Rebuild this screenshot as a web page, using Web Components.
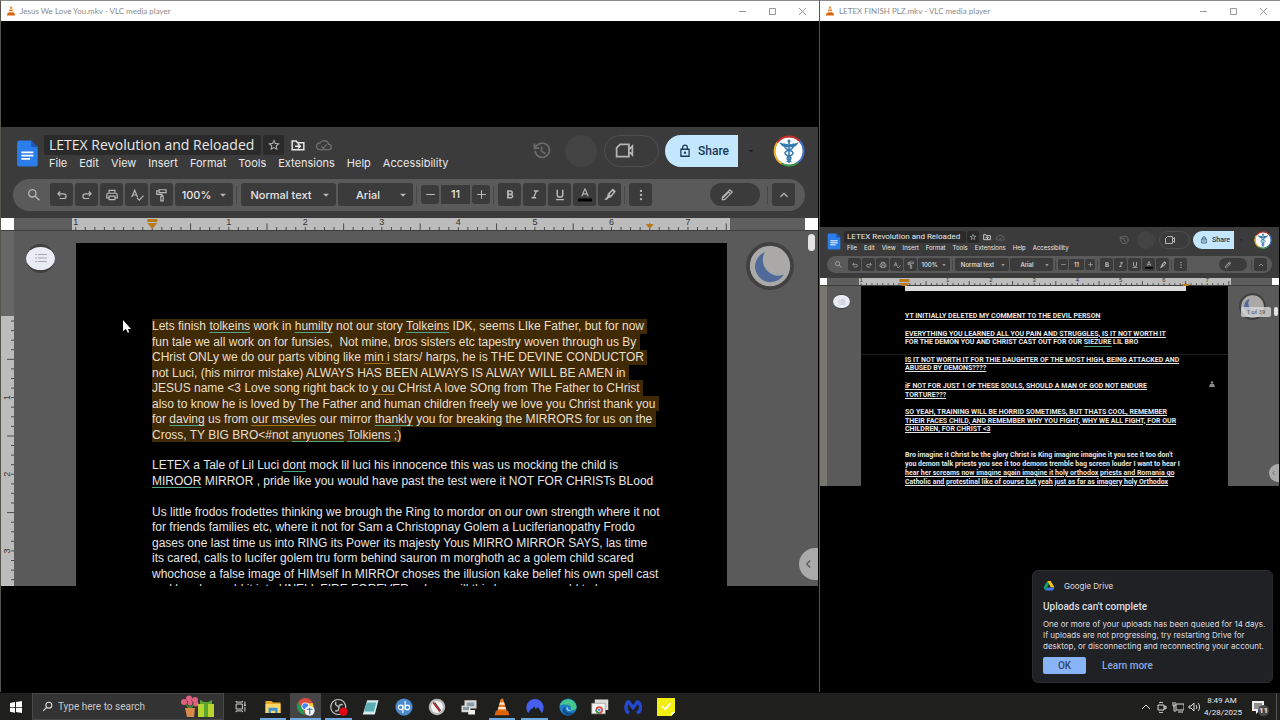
<!DOCTYPE html>
<html lang="en">
<head>
<meta charset="utf-8">
<title>Desktop</title>
<style>
html,body{margin:0;height:100%;background:#000;overflow:hidden}
body{font-family:Roboto,"Liberation Sans",sans-serif}
</style>
</head>
<body>
<desk-top>
  <player-window caption="Jesus We Love You.mkv - VLC media player">
    <docs-app>
      <p class="hl" style="--n:8">
        <span>Lets finish <u>tolkeins</u> work in <u>humilty</u> not our story <u>Tolkeins</u> IDK, seems LIke Father, but for now </span>
        <span>fun tale we all work on for funsies,&nbsp; Not mine, bros sisters etc tapestry woven through us By </span>
        <span>CHrist ONLy we do our parts vibing like <u class="o">min i</u> stars/ harps, he is THE DEVINE CONDUCTOR </span>
        <span>not Luci, (his mirror mistake) ALWAYS HAS BEEN ALWAYS IS ALWAY WILL BE AMEN in </span>
        <span>JESUS name &lt;3 Love song right back to <u class="o">y ou</u> CHrist A love SOng from The Father to CHrist </span>
        <span>also to know he is loved by The Father and human children freely we love you Christ thank you </span>
        <span>for <u>daving</u> us from <u class="o">our msevles</u> our mirror <u>thankly</u> you for breaking the MIRRORS for us on the </span>
        <span>Cross, TY BIG BRO&lt;#not <u>anyuones</u> <u>Tolkiens</u> ;)</span>
      </p>
      <p class="skip" style="--n:2">
        <span>LETEX a Tale of Lil Luci <u>dont</u> mock lil luci his innocence this was us mocking the child is</span>
        <span><u>MIROOR</u> MIRROR , pride like you would have past the test were it NOT FOR CHRISTs BLood</span>
      </p>
      <p class="skip" style="--n:6">
        <span>Us little frodos frodettes thinking we brough the Ring to mordor on our own strength where it not</span>
        <span>for friends families etc, where it not for Sam a Christopnay Golem a Luciferianopathy Frodo</span>
        <span>gases one last time us into RING its Power its majesty Yous MIRRO MIRROR SAYS, las time</span>
        <span>its cared, calls to lucifer golem tru form behind sauron m morghoth ac a golem child scared</span>
        <span>whochose a false image of HIMself In MIRROr choses the illusion kake belief his own spell cast</span>
        <span>and breaks world it into HNELL FIRE FOREVER, where will this become a world to love</span>
      </p>
    </docs-app>
  </player-window>
  <player-window caption="LETEX FINISH PLZ.mkv - VLC media player">
    <docs-app compact>
      <p class="b" style="--n:1"><span>YT INITIALLY DELETED MY COMMENT TO THE DEVIL PERSON</span></p>
      <p class="b skip" style="--n:2"><span>EVERYTHING YOU LEARNED ALL YOU PAIN AND STRUGGLES, IS IT NOT WORTH IT</span>
        <span class="n">FOR THE DEMON YOU AND CHRIST CAST OUT FOR OUR <u>SIEZURE</u> LIL BRO</span></p>
      <p class="b skip" style="--n:2"><span>IS IT NOT WORTH IT FOR THIE DAUGHTER OF THE MOST HIGH, BEING ATTACKED AND</span>
        <span>ABUSED BY DEMONS????</span></p>
      <p class="b skip" style="--n:2"><span>iF NOT FOR JUST 1 OF THESE SOULS, SHOULD A MAN OF GOD NOT ENDURE</span>
        <span>TORTURE???</span></p>
      <p class="b skip" style="--n:3"><span>SO YEAH, TRAINING WILL BE HORRID SOMETIMES, BUT THATS COOL, REMEMBER</span>
        <span>THEIR FACES CHILD, AND REMEMBER WHY YOU FIGHT, WHY WE ALL FIGHT, FOR OUR</span>
        <span>CHILDREN, FOR CHRIST &lt;3</span></p>
      <p class="b skip2" style="--n:4"><span class="n">Bro imagine it Christ be the glory Christ is King imagine imagine it you see it too don't</span>
        <span class="n">you demon talk priests you see it too demons tremble bag screen louder I want to hear I</span>
        <span>hear her screams now imagine again imagine it holy orthodox priests and Romania go</span>
        <span>Catholic and protestinal like of course but yeah just as far as imagery holy Orthodox</span></p>
    </docs-app>
  </player-window>
  <drive-toast slot="toast"></drive-toast>
  <task-bar slot="bar"></task-bar>
</desk-top>
<script>
const stroke = (body, w = 2) => `<g fill="none" stroke="currentColor" stroke-width="${w}">${body}</g>`;
const ICON = {
  search: stroke('<circle cx="9.500" cy="9.500" r="5.500"/><path d="M13.500 13.500 20 20"/>'),
  undo: stroke('<path d="M9 6 5 10l4 4M5 10h10a4 4 0 0 1 0 8H8"/>'),
  redo: stroke('<path d="m15 6 4 4-4 4M19 10H9a4 4 0 0 0 0 8h7"/>'),
  print: stroke('<path d="M7 9V4h10v5M7 17H3v-5a3 3 0 0 1 3-3h12a3 3 0 0 1 3 3v5h-4M7 14h10v6H7z"/>'),
  spell: stroke('<path d="m3 16 5-12 5 12M5 12h6M12 17l4 4 7-8"/>'),
  paint: stroke('<path d="M7 3h12v5H7zM7 5H3v6h9v3M10 14h4v8h-4z"/>'),
  caret: '<path fill="currentColor" d="M5 9h14l-7 7z"/>',
  minus: stroke('<path d="M4 12h16"/>'),
  plus: stroke('<path d="M4 12h16M12 4v16"/>'),
  bold: '<path fill="currentColor" d="M15.600 10.800c1-.7 1.600-1.800 1.600-2.800 0-2.300-1.700-4-4-4H7v14h7c2.100 0 3.700-1.700 3.700-3.800 0-1.500-.8-2.800-2.100-3.400zM10 6.500h3a1.500 1.500 0 0 1 0 3h-3zm3.500 9H10v-3h3.500a1.500 1.500 0 0 1 0 3z"/>',
  italic: '<path fill="currentColor" d="M10 4v2.500h2.700l-3.800 9H6V18h8v-2.500h-2.700l3.800-9H18V4z"/>',
  under: '<path fill="currentColor" d="M12 17a6 6 0 0 0 6-6V3h-2.500v8a3.500 3.500 0 0 1-7 0V3H6v8a6 6 0 0 0 6 6zm-7 2v2h14v-2z"/>',
  color: '<path fill="currentColor" d="M11 1 5.500 14h2.300l1.100-3h6.200l1.100 3h2.300L13 1zm-1.400 8L12 3.500 14.400 9z"/><path d="M-2 18h28v5H-2z" fill="#000"/>',
  marker: '<path fill="currentColor" d="m17 1 5 5-8 10-4 1-3 3H2l5-5 1-5zM16 5l-5 6 2 2 5-6z" fill-rule="evenodd"/>',
  more: '<g fill="currentColor"><circle cx="12" cy="5" r="2"/><circle cx="12" cy="12" r="2"/><circle cx="12" cy="19" r="2"/></g>',
  pencil: stroke('<path d="M4 20v-4L17 3l4 4L8 20zM14 6l4 4M5 17 16 6"/>'),
  up: stroke('<path d="m6 15 6-6 6 6"/>'),
  left: stroke('<path d="m14 6-6 6 6 6"/>'),
  star: '<path fill="currentColor" d="m22 9.240-7.190-.62L12 2 9.190 8.630 2 9.240l5.460 4.730L5.820 21 12 17.270 18.180 21l-1.630-7.030zM12 15.400l-3.760 2.270 1-4.280-3.320-2.880 4.380-.38L12 6.100l1.710 4.040 4.380.38-3.320 2.880 1 4.280z"/>',
  folder: stroke('<path d="M2 5h7l2 3h11v12H2zM7 14h8M12 10l4 4-4 4"/>', 2.5),
  cloud: stroke('<path d="M6 19a5 5 0 0 1 0-10 7 7 0 0 1 13 2 4 4 0 0 1 0 8zM8 14l3 3 5-6"/>', 2),
  history: stroke('<path d="M4 12a9 9 0 1 0 3-7L3 8M3 3v6h6M12 7v6l5 3"/>', 2.2),
  cam: stroke('<path d="M7 5h10v14H3V9zM17 11l4-4v10l-4-4"/>', 2),
  lock: stroke('<path d="M5 9h14v12H5zM8 9V6a4 4 0 0 1 8 0v3"/>', 2.2) + '<circle cx="12" cy="15" r="2" fill="currentColor"/>',
  list: stroke('<path d="M7 6h15M7 12h15M7 18h15M2 6h3M2 12h3M2 18h3"/>', 2),
  docs: '<path fill="#2b7de9" d="M3 0h11l6 6v16a2 2 0 0 1-2 2H3a2 2 0 0 1-2-2V2a2 2 0 0 1 2-2z"/><path fill="#1b56b8" d="M14 0l6 6h-6z"/><path stroke="#fff" stroke-width="1.500" d="M5 11h11M5 14h11M5 17h8"/>',
  cone: '<path fill="#e8781a" d="M10.500 1h3l5 17h-13z"/><path fill="#f6e8da" d="m9.200 6-.9 3h7.400l-.9-3zm-1.800 6-.8 3h10.800l-.8-3z"/><path fill="#d9640c" d="M4 17h16l2 6H2z"/>',
  moon: '<circle cx="12" cy="12" r="12" fill="#414142"/><circle cx="12" cy="12" r="10.100" fill="#aaa9a7"/><path fill="#4f6a99" d="M9.500 5a7.800 7.800 0 1 0 9.500 11.300A7.800 7.800 0 0 1 9.500 5z"/>',
  avatar: '<circle cx="12" cy="12" r="10.400" fill="#fff"/><g fill="none" stroke-width="1.400"><path stroke="#c5312a" d="M3.300 5.500a11 11 0 0 1 16.500-1.200"/><path stroke="#3f6fd0" d="M19.800 4.300a11 11 0 0 1-1 16.400"/><path stroke="#3b9a4a" d="M18.800 20.700a11 11 0 0 1-12.500.7"/><path stroke="#e6b52c" d="M6.300 21.400A11 11 0 0 1 3.300 5.500"/></g><g fill="none" stroke="#3578ad"><path stroke-width="1.200" d="M12 4v17"/><path stroke-width="1.100" d="M9 9c0 2.500 6 2 6 4.500s-4.500 2-4.500 4 3 1.500 3 3M15 9c0 2.500-6 2-6 4.500s4.500 2 4.500 4-3 1.500-3 3"/></g><path fill="#3578ad" d="M12 7.500C10 6 7.500 7 5 5.300c.7 3 3.500 4.500 7 3.800 3.500.7 6.300-.8 7-3.800-2.500 1.700-5 .7-7 2.200z"/><circle cx="12" cy="4.500" r="1.200" fill="#3578ad"/>',
};
const icon = (n, c = '') => `<svg class="i ${c}" viewBox="0 0 24 24" aria-hidden="true">${ICON[n]}</svg>`;

const define = (name, html) => customElements.define(name, class extends HTMLElement {
  connectedCallback() {
    if (this.shadowRoot) return;
    this.attachShadow({ mode: 'open' }).innerHTML = typeof html === 'function' ? html(this) : html;
  }
});

define('desk-top', `<style>
:host{display:flex;flex-direction:column;height:100vh;position:relative;background:#000}
main{flex:1;display:grid;grid-template-columns:819fr 461fr;min-height:0}
::slotted(drive-toast){position:absolute;right:7px;bottom:37px}
</style><main><slot></slot></main><slot name="toast"></slot><slot name="bar"></slot>`);

define('player-window', el => `<style>
:host{display:flex;flex-direction:column;min-width:0;border-left:1px solid #55554c;border-top:1px solid #8a8a8a;background:#000;box-sizing:border-box}
header{display:flex;align-items:center;height:20px;background:#fff;color:#8a8a8a;padding:0 6px 0 5px}
.i{width:10px;height:10px;margin-right:4px}
h2{margin:0;flex:1;font:400 8px/12px Lato,"Open Sans",sans-serif;white-space:nowrap}
nav{display:flex;gap:20px;padding-right:6px}
button{all:unset;width:10px;height:10px;display:block}
button svg{display:block;width:10px;height:10px;fill:none;stroke:#999}
section{flex:1;display:flex;align-items:center;min-height:0;padding-right:1px}
::slotted(*){flex:1;min-width:0}
</style><header>${icon('cone')}<h2>${el.getAttribute('caption')}</h2><nav>
<button aria-label="Minimize"><svg viewBox="0 0 10 10"><path d="M2 5.500h7"/></svg></button>
<button aria-label="Maximize"><svg viewBox="0 0 10 10"><path d="M2.500 2.500h6v6h-6z"/></svg></button>
<button aria-label="Close"><svg viewBox="0 0 10 10"><path d="m2 2 7 7M9 2 2 9"/></svg></button>
</nav></header><section><slot></slot></section>`);

define('docs-app', el => `<style>
:host{display:flex;flex-direction:column;aspect-ratio:16/9;background:#3b3b3b;overflow:hidden;
 --corner:13px;--rulerh:12px;--rl:58px;--rr:75px;--rfont:9px;--gl:62px;--gr:91px;--top:12px;--pt:76px;--pl:76px;
 --rows:18;--bodyh:278px;--text:400 12px/1 "Liberation Sans",Arial,sans-serif}
:host([compact]){--corner:7px;--rulerh:7px;--rl:32px;--rr:41px;--rfont:6px;--gl:34px;--gr:51px;--top:0px;--pt:21px;--pl:44px;
 --rows:20;--bodyh:174px;--text:700 7px/1 Roboto,"Liberation Sans",sans-serif}
.body{flex:1;display:flex;min-height:0;background:#5a5a5a;position:relative}
.gl{width:var(--gl);flex:none}
.page{flex:1;min-width:0;margin-top:var(--top);background:#000;overflow:hidden}
.strip{display:none}
article{display:grid;grid-template-rows:repeat(var(--rows),1fr);height:var(--bodyh);padding:var(--pt) 0 0 var(--pl);
 font:var(--text);color:#e6e6e6}
.gr{width:var(--gr);flex:none;position:relative}
.outline{all:unset;box-sizing:border-box;width:29px;height:29px;margin:13px 0 0 12px;border-radius:15px;background:#e9ecf5;border:solid #414142;border-width:3px 0;display:flex;align-items:center;justify-content:center;color:#a3a6b4}
.outline .i{width:14px;height:14px}
.moon{position:absolute;left:19px;top:11px;width:48px;height:48px}
.thumb{position:absolute;right:3px;top:3px;width:7px;height:17px;border-radius:4px;background:#e4e4e4}
.side{all:unset;position:absolute;right:0;bottom:6px;width:19px;height:32px;border-radius:16px 0 0 16px;background:#aaa;color:#555;display:flex;align-items:center;justify-content:center}
.side .i{width:14px;height:14px}
.cursor{position:absolute;left:121px;top:88px;width:9px;height:15px}
.tip,.note,.rule{display:none}
:host([compact]) .strip{display:block;height:5px;margin:0 42px 0 44px;background:#dcdcdc}
:host([compact]) .outline{width:17px;height:15px;border-width:1px 0;margin:8px 0 0 6px}
:host([compact]) .outline .i{width:8px;height:8px}
:host([compact]) .moon{left:11px;top:7px;width:27px;height:27px}
:host([compact]) .thumb{right:1px;top:21px;width:4px;height:9px}
:host([compact]) .side{width:10px;height:18px;bottom:4px}
:host([compact]) .side .i{width:8px;height:8px}
:host([compact]) .cursor{display:none}
:host([compact]) .tip{display:block;position:absolute;right:8px;top:21px;width:30px;border-radius:2px;background:#d8d8d8;color:#444;opacity:.8;font:6px/10px Roboto,sans-serif;text-align:center}
:host([compact]) .note{display:block;position:absolute;left:389px;top:95px;width:6px;height:6px;fill:#8a8a8a}
:host([compact]) .rule{display:block;position:absolute;left:41px;right:51px;top:68px;height:1px;background:#1c1c1c}
</style>
<docs-header ${el.hasAttribute('compact') ? 'compact' : ''}></docs-header>
<docs-toolbar ${el.hasAttribute('compact') ? 'compact' : ''}></docs-toolbar>
<docs-ruler></docs-ruler>
<div class="body"><side-ruler ${el.hasAttribute('compact') ? 'compact' : ''}></side-ruler>
<div class="gl"><button class="outline" aria-label="Outline">${icon('list')}</button></div>
<div class="page"><div class="strip"></div><article><doc-text></doc-text></article></div>
<div class="gr">${icon('moon', 'moon')}<div class="tip">1 of 39</div><div class="thumb"></div><button class="side" aria-label="Show side panel">${icon('left')}</button></div>
<div class="rule"></div><svg class="note" viewBox="0 0 6 6"><circle cx="3" cy="1.500" r="1.300"/><path d="M1 3h4l1 3H0z"/></svg>
<svg class="cursor" viewBox="0 0 9 15"><path fill="#fff" d="M1 1v11l3-2 2 4 1-1-1-3h3z"/></svg></div>`);

// Typed lines: each line of a paragraph sits in one row of the page's line grid.
customElements.define('doc-text', class extends HTMLElement {
  connectedCallback() {
    if (this.shadowRoot) return;
    const host = this.getRootNode().host;
    this.attachShadow({ mode: 'open' }).innerHTML = `<style>
:host{display:grid;grid-row:1/-1;grid-template-rows:subgrid}
p{margin:0;display:grid;grid-template-rows:subgrid;grid-row-end:span var(--n);justify-items:start}
.gap{grid-row-end:span 1}.gap2{grid-row-end:span 2}
span{display:flex;align-items:center;white-space:pre}
.hl span{background:#402a06;color:#e8dfcd}
u{text-decoration:underline 1px #4fa585;text-underline-offset:2px}
u.o{text-decoration-color:#a0701c}
.b span{text-decoration:underline;text-decoration-thickness:1px}
.b .n{text-decoration:none}
</style>`;
    for (const p of host.querySelectorAll(':scope > p')) {
      if (p.classList.contains('skip') || p.classList.contains('skip2')) {
        const g = document.createElement('div');
        g.className = p.classList.contains('skip2') ? 'gap2' : 'gap';
        this.shadowRoot.append(g);
      }
      const q = p.cloneNode(false);
      for (const s of p.querySelectorAll(':scope > span')) {
        const row = document.createElement('span'), text = document.createElement('div');
        row.className = s.className;
        text.append(...[...s.childNodes].map(n => n.cloneNode(true)));
        row.append(text);
        q.append(row);
      }
      this.shadowRoot.append(q);
    }
  }
});

define('docs-header', `<style>
:host{display:flex;box-sizing:border-box;height:52px;padding:8px 13px 0 15px;color:#e8e8e8}
.i{width:14px;height:14px;flex:none}
.docs{width:26px;height:29px;margin:4px 0 0 0}
.names{margin-left:2px}
.row{display:flex;align-items:center;gap:2px}
h1{margin:0;font:400 14px/20px "Open Sans",Roboto,sans-serif;background:#2a2a2a;padding:0 7px 0 5px;border-radius:2px;white-space:nowrap}
.star{all:unset;width:21px;height:20px;background:#2a2a2a;display:grid;place-items:center;border-radius:2px;color:#bbb}
.fold,.cl{all:unset;display:grid;place-items:center;width:24px;height:20px}
.cl{color:#707070}
.cl .i{width:16px;height:16px}
menu{display:flex;gap:12px;margin:1px 0 0;padding:0 5px;font:11px/15px Inter,Roboto,sans-serif;list-style:none}
menu button{all:unset;white-space:nowrap}
.right{margin-left:auto;display:flex;align-items:center;height:32px}
.hist{color:#6c6c6c;width:19px;height:19px}
.dot{width:32px;height:32px;border-radius:50%;background:#434343;margin:0 7px 0 14px}
.meet{all:unset;box-sizing:border-box;width:55px;height:32px;border:1px solid #4e4e4e;border-radius:16px;display:flex;align-items:center;padding-left:9px;color:#b5b5b5}
.meet .i{width:21px;height:21px}
.share{all:unset;box-sizing:border-box;margin-left:6px;width:73px;height:32px;border-radius:16px 0 0 16px;background:#c2e7ff;color:#1c3a52;display:flex;align-items:center;padding-left:13px;gap:6px;font:500 12px/16px Roboto,sans-serif}
.c{color:#1a1a1a;width:8px;height:8px;margin:0 18px 0 9px}
.av{width:32px;height:32px}
:host([compact]){height:29px;padding:4px 7px 0 7px}
:host([compact]) .i{width:8px;height:8px}
:host([compact]) .docs{width:16px;height:17px;margin-top:2px}
:host([compact]) .names{margin-left:1px}
:host([compact]) h1{font:400 8px/12px Roboto,sans-serif;padding:0 6px 0 3px}
:host([compact]) .row{gap:1px}
:host([compact]) .star{width:12px;height:12px}
:host([compact]) .fold,:host([compact]) .cl{width:13px;height:12px}
:host([compact]) .cl .i{width:9px;height:9px}
:host([compact]) menu{font-size:6px;line-height:8px;gap:7px;padding:0 3px}
:host([compact]) .right{height:18px}
:host([compact]) .hist{width:10px;height:10px}
:host([compact]) .dot{width:18px;height:18px;margin:0 4px 0 8px}
:host([compact]) .meet{width:31px;height:18px;padding-left:4px}
:host([compact]) .meet .i{width:12px;height:12px}
:host([compact]) .share{width:41px;height:18px;padding-left:7px;gap:4px;margin-left:3px;font-size:7px;line-height:10px}
:host([compact]) .c{width:4px;height:4px;margin:0 11px 0 5px}
:host([compact]) .av{width:18px;height:18px}
</style>${icon('docs', 'docs')}
<div class="names"><div class="row"><h1>LETEX Revolution and Reloaded</h1><button class="star" aria-label="Star">${icon('star')}</button><button class="fold" aria-label="Move">${icon('folder')}</button><button class="cl" aria-label="Document status">${icon('cloud')}</button></div>
<menu>${['File', 'Edit', 'View', 'Insert', 'Format', 'Tools', 'Extensions', 'Help', 'Accessibility'].map(t => `<li><button>${t}</button></li>`).join('')}</menu></div>
<div class="right">${icon('history', 'hist')}<div class="dot"></div><button class="meet" aria-label="Meet">${icon('cam')}</button><button class="share">${icon('lock')}Share</button>${icon('caret', 'c')}${icon('avatar', 'av')}</div>`);

const tool = (n, label, c = '') => `<button class="t ${c}" aria-label="${label}">${icon(n)}</button>`;
const drop = (text, label, c) => `<label class="drop ${c}"><select aria-label="${label}"><option>${text}</option></select>${icon('caret')}</label>`;
define('docs-toolbar', `<style>
:host{display:flex;align-items:center;box-sizing:border-box;height:32px;margin:0 13px 7px 12px;padding:0 10px 0 7px;border-radius:16px;background:#5a5a5a;color:#b8b8b8;gap:2px;
 --t:23px;--i:14px;--f:11px}
.i{width:var(--i);height:var(--i);flex:none}
.t{all:unset;width:var(--t);height:var(--t);background:#3b3b3b;border-radius:3px;display:grid;place-items:center;flex:none}
.find{background:none;width:28px}
.find .i{width:16px;height:16px}
.drop{height:var(--t);background:#3b3b3b;border-radius:3px;display:flex;align-items:center;box-sizing:border-box;padding-right:5px;flex:none}
.drop .i{width:10px;height:10px}
select{all:unset;flex:1;min-width:0;text-align:center;font:500 var(--f)/16px Inter,sans-serif;color:#e6e6e6}
.zoom{width:58px}.style{width:95px}.font{width:75px}
hr{margin:0 2px 0 1px;border:0;width:1px;height:18px;background:#474747;flex:none}
.s{width:18px;height:19px}.s .i{width:13px;height:13px}
input{all:unset;width:29px;height:19px;background:#3b3b3b;text-align:center;font:500 var(--f)/19px Inter,sans-serif;color:#e6e6e6;flex:none}
.edit{width:50px;border-radius:12px;margin:0 4px 0 auto;place-items:center start}
.edit .i{margin-left:10px}
:host([compact]){height:17px;margin:0 7px 5px 7px;padding:0 5px 0 3px;gap:1px;--t:13px;--i:8px;--f:6px}
:host([compact]) .find{width:17px}
:host([compact]) .find .i{width:9px;height:9px}
:host([compact]) .t,:host([compact]) .drop{border-radius:2px}
:host([compact]) .drop{padding-right:3px}
:host([compact]) .drop .i{width:6px;height:6px}
:host([compact]) select{line-height:10px}
:host([compact]) .zoom{width:32px}:host([compact]) .style{width:54px}:host([compact]) .font{width:43px}
:host([compact]) hr{height:10px;margin:0 1px}
:host([compact]) .s{width:10px;height:11px}:host([compact]) .s .i{width:7px;height:7px}
:host([compact]) input{width:15px;height:11px;line-height:11px}
:host([compact]) .edit{width:28px;border-radius:7px;margin-right:2px}
:host([compact]) .edit .i{margin-left:5px}
</style>${tool('search', 'Search', 'find')}${tool('undo', 'Undo')}${tool('redo', 'Redo')}${tool('print', 'Print')}${tool('spell', 'Spelling')}${tool('paint', 'Paint format')}${drop('100%', 'Zoom', 'zoom')}<hr>${drop('Normal text', 'Styles', 'style')}${drop('Arial', 'Font', 'font')}<hr>${tool('minus', 'Decrease', 's')}<input value="11" aria-label="Font size">${tool('plus', 'Increase', 's')}<hr>${tool('bold', 'Bold')}${tool('italic', 'Italic')}${tool('under', 'Underline')}${tool('color', 'Text color')}${tool('marker', 'Highlight')}<hr>${tool('more', 'More')}${tool('pencil', 'Editing mode', 'edit')}<hr>${tool('up', 'Hide menus')}`);

define('docs-ruler', () => {
  let marks = '';
  for (let k = -8; k <= 60; k++) {
    const x = (12.2 + 11.63 * k / 8).toFixed(2) + '%';
    if (k % 8 === 0 && k !== 0) marks += `<text x="${x}" y="60%">${Math.abs(k / 8)}</text>`;
    marks += `<line x1="${x}" x2="${x}" y1="${k % 8 === 4 ? '45%' : '75%'}" y2="100%"/>`;
  }
  return `<style>
:host{display:flex;height:var(--rulerh);border-bottom:1px solid #3d3d3d;flex:none}
i{background:#fff;width:var(--corner)}
b{background:#5e5e5e;width:var(--rl)}.r{width:var(--rr)}
div{flex:1;background:#bcbcbc}
svg{display:block;width:100%;height:100%;overflow:visible}
line{stroke:#4a4a4a}
text{font:var(--rfont) "Liberation Sans",sans-serif;text-anchor:middle;fill:#333}
.m{fill:#b97a1c}
</style><i></i><b></b><div><svg>${marks}<svg x="12.2%" overflow="visible"><path class="m" d="M-5 1H5V4H-5zM-5 5H5L0 11z"/></svg><svg x="87.8%" overflow="visible"><path class="m" d="M-4 6H4L0 11z"/></svg></svg></div><b class="r"></b><i></i>`;
});

define('side-ruler', el => {
  if (el.hasAttribute('compact')) return '<style>:host{width:7px;background:#777770}</style>';
  let marks = '';
  for (let k = 0; k < 29; k++) {
    const y = (90 + 9.58 * k).toFixed(1);
    if (k && k % 8 === 0) marks += `<text transform="translate(9 ${y}) rotate(-90)">${k / 8}</text>`;
    marks += `<path d="M${k % 8 === 4 ? 6 : 10} ${y}H13"/>`;
  }
  return `<style>:host{width:13px;flex:none;background:linear-gradient(#666 85px,#bcbcbc 85px);overflow:hidden}
svg{display:block;width:13px;height:360px}path{stroke:#4a4a4a}text{font:9px "Liberation Sans",sans-serif;text-anchor:middle;fill:#333}</style><svg viewBox="0 0 13 360">${marks}</svg>`;
});

define('drive-toast', `<style>
:host{display:block;box-sizing:border-box;width:241px;height:113px;border-radius:6px;background:#202124;padding:9px 10px;color:#dcdde0;border:1px solid #2b2c2f}
header{display:flex;align-items:center;gap:9px;font:8px/12px Inter,sans-serif}
header svg{width:12px;height:12px}
h3{margin:9px 0 6px;font-size:10px;line-height:12px;font-weight:500}
p{margin:0;font:8px/11px Inter,sans-serif;white-space:nowrap}
footer{display:flex;align-items:center;gap:16px;margin-top:5px;font-size:10px;font-weight:500}
button{all:unset;width:43px;height:17px;border-radius:2px;background:#8ab4f8;color:#33496e;text-align:center;font-weight:500}
a{color:#8ba8e0;text-decoration:none}
</style><header><svg viewBox="0 0 24 24"><path fill="#f9c513" d="M8.500 2h7L23 15h-7z"/><path fill="#13a05f" d="M8.500 2 1 15l3.500 6L12 8z"/><path fill="#3f7de8" d="M8 15h15l-3.500 6h-15z"/></svg>Google Drive</header>
<h3>Uploads can't complete</h3><p>One or more of your uploads has been queued for 14 days.<br>If uploads are not progressing, try restarting Drive for<br>desktop, or disconnecting and reconnecting your account.</p>
<footer><button>OK</button><a href="#">Learn more</a></footer>`);

const APP = [
  ['Task View', '', '<g fill="none" stroke="#ddd" stroke-width="1.500"><path d="M5 8h10v8H5zM5 5V3M15 5V3M5 19v2M15 19v2M5 5h10M5 19h10M19 4v5M19 13v7"/></g><circle cx="19" cy="10" r="1.500" fill="#ddd"/>'],
  ['File Explorer', 'on', '<path fill="#e8a92b" d="M2 4h8l2 2h10v14H2z"/><path fill="#fbd767" d="M2 8h20v12H2z"/><path fill="#3d93d8" d="M6 13h12v7h-3v-3H9v3H6z"/>'],
  ['Chrome', 'on active', '<circle cx="11" cy="11" r="11" fill="#dd4b3e"/><path fill="#249a55" d="M1.500 5.500 8 15l3 7A11 11 0 0 1 1.500 5.500z"/><path fill="#f7cb3a" d="M11 22a11 11 0 0 0 10-15H12l4 8z"/><circle cx="11" cy="11" r="5" fill="#fff"/><circle cx="11" cy="11" r="4" fill="#4285f4"/><circle cx="17" cy="17" r="6.500" fill="#fff"/><path stroke="#3578ad" stroke-width="1.600" d="M17 13v9M13 15h8" />'],
  ['OBS', 'on', '<circle cx="11" cy="12" r="10" fill="#222" stroke="#ccc" stroke-width="1.500"/><path fill="none" stroke="#bbb" stroke-width="2" d="M8 5c-2 4 1 6 4 6M17 9c-4-1-6 2-5 5M7 17c4 1 6-2 4-6"/><circle cx="18" cy="18" r="5.500" fill="#e30613"/>'],
  ['Notepad', '', '<path fill="#d5ecec" d="M7 3h15l-5 19H1z"/><path fill="#5aaeb4" d="M6 6h13l-3 12H3z"/>'],
  ['qBittorrent', '', '<circle cx="12" cy="12" r="11.500" fill="#4a8bd0"/><path d="M10.500 9v11M13.500 4v12" stroke="#fff" stroke-width="1.500"/><circle cx="7.500" cy="12.500" r="3" fill="none" stroke="#fff" stroke-width="1.500"/><circle cx="16.500" cy="12.500" r="3" fill="none" stroke="#fff" stroke-width="1.500"/>'],
  ['Clock', '', '<circle cx="12" cy="12" r="11" fill="#b9b9b9"/><circle cx="12" cy="12" r="8" fill="#f2f2f2"/><path stroke="#b22" stroke-width="2.500" d="m7 6 9 12"/><path stroke="#444" stroke-width="1.500" d="m9 6 8 11"/>'],
  ['Monitor', '', '<path fill="#d8d8d8" d="M6 3h16v11H6zM2 10h12v9H2z"/><path fill="#8a9aa5" d="M9 6h10v5H9zM4 12h8v4H4z"/><path fill="#eee" d="M11 16h9v6h-9z"/>'],
  ['VLC', 'on', ICON.cone],
  ['NordVPN', 'on', '<path fill="#4560f0" d="M3 20A11.500 11.500 0 1 1 21 20l-5-8-3 3-2-4-3 4-1-1z"/>'],
  ['Edge', '', '<circle cx="12" cy="12" r="11.500" fill="#1d7fc4"/><path fill="#45c58e" d="M1 10A11.500 11.500 0 0 1 23.500 12c0 4-5 5-8 4 2-4-1-7-5-7-4-1-7 0-9.500 1z"/><path fill="#134c8c" d="M9 11c-3 5 2 11 12 8-4 6-15 5-16-2 0-3 2-5 4-6z"/><path fill="#cfe9f4" d="M12 11c-2 3 1 6 5 6-2 1-7 0-7-3 0-1 1-2 2-3z"/>'],
  ['Remote Desktop', '', '<path fill="#ddd" d="M5 2h18v14H5z"/><path fill="#f5f5f5" stroke="#999" d="M1 7h18v14H1z"/><circle cx="11" cy="16" r="5" fill="#d94b3e"/><path fill="#2b9a55" d="M6 16a5 5 0 0 0 5 5v-5z"/><circle cx="11" cy="16" r="2.200" fill="#4285f4" stroke="#fff"/>'],
  ['Malwarebytes', '', '<path fill="none" stroke="#2348d0" stroke-width="4.500" d="M7 20C-1 17 4 5 6 5l6 8 6-8c3 1 8 12-1 15"/>'],
  ['Sticky Notes', '', '<path fill="#f3ee12" d="M0 0h24v19l-5 5H0z"/><path fill="#fff" d="M24 19h-5v5z"/><path fill="none" stroke="#fff" stroke-width="2.200" d="m7 11 4 4 7-8"/>'],
];
define('task-bar', `<style>
:host{display:flex;align-items:stretch;height:28px;flex:none;background:#1f1f1d;color:#e6e6e6;border-top:1px solid #000;box-sizing:border-box}
button{all:unset}
.start{width:32px;display:grid;place-items:center}
.start svg{width:12px;height:12px}
.find{display:flex;align-items:center;box-sizing:border-box;width:192px;background:#333;border:1px solid #484848;padding:0 8px}
.find .m{width:13px;height:13px;color:#ddd;margin-right:4px;transform:scaleX(-1)}
input{all:unset;flex:1;min-width:0;font:10px/16px Roboto,sans-serif}
input::placeholder{color:#c8c8c8;opacity:1}
.gift{width:35px;height:24px}
.apps{display:flex;width:458px}
.apps button{flex:1;display:grid;place-items:center;box-sizing:border-box;margin:0 3px}
.apps button.on{border-bottom:2px solid #6fa8dc;padding-top:2px}
.apps button.active{background:#454545;margin:0 1px;padding-left:2px;padding-right:2px}
.apps svg{width:18px;height:18px}
.apps button:first-child svg{width:15px;height:15px}
.tray{margin-left:auto;display:flex;align-items:center;gap:4px;padding-right:3px}
.tray svg{width:12px;height:12px;fill:none;stroke:#ddd;stroke-width:1}
time{font-size:8px;line-height:12px;text-align:center;width:36px;margin:0 5px 0 0;white-space:nowrap}
.note{position:relative;display:grid;place-items:center;width:18px;margin-right:5px}
.tray .note svg{width:14px;height:14px}
.note b{position:absolute;left:9px;top:5px;width:11px;height:11px;border-radius:50%;background:#4a4a4a;font-weight:700;font-size:8px;line-height:11px;text-align:center}
.show{width:1px;height:27px;background:#555}
</style><button class="start" aria-label="Start"><svg viewBox="0 0 12 12" fill="#fff"><path d="M0 2l5-1v5H0zM6 1l6-1v6H6zM0 6.700h5v5l-5-1zM6 6.700h6V12l-6-1z"/></svg></button>
<label class="find">${icon('search', 'm')}<input type="text" placeholder="Type here to search" aria-label="Search"><svg class="gift" viewBox="0 0 35 24"><path stroke="#3f8a3a" stroke-width="1.500" d="M10 14V6M10 14 5 8M10 14l5-6"/><g fill="#e0607f"><circle cx="4" cy="7" r="3"/><circle cx="9" cy="3.500" r="3"/><circle cx="15" cy="5" r="3"/><circle cx="10" cy="8" r="2.500"/><circle cx="16" cy="9" r="2.500"/></g><path fill="#d98a4a" d="M5 13h10l-1 9H7z"/><path fill="#b9d432" d="M18 9h16v13H18z"/><path fill="#5aa62c" d="M24 7h4v15h-4zM20 5l6 3 6-3v4H20z"/></svg></label>
<div class="apps">${APP.map(([n, c, s]) => `<button class="${c}" aria-label="${n}"><svg viewBox="0 0 24 24">${s}</svg></button>`).join('')}</div>
<div class="tray"><svg viewBox="0 0 12 12"><path d="m2 8 4-4 4 4"/></svg><svg viewBox="0 0 12 12"><path d="M2 4h6v5H2zM8 6l2-1v3L8 7M3 2c1-1 3-1 4 0M3 11c1 1 3 1 4 0"/></svg><svg viewBox="0 0 12 12"><path d="M4 3h8v6H4zM6 11h5M1 1v4h2V1M2 5v5h2"/></svg><svg viewBox="0 0 12 12"><path d="M1 5h2l3-3v8L3 7H1zM8 4c1 1 1 3 0 4M10 2c2 2 2 6 0 8"/></svg>
<time>8:49 AM<br>4/28/2025</time><button class="note" aria-label="Notifications"><svg viewBox="0 0 14 14"><path fill="#eee" stroke="none" d="M1 1h12v10H8l-3 3v-3H1z"/><path stroke="#333" d="M3 4h8M3 6h8M3 8h5"/></svg><b>11</b></button><span class="show"></span></div>`);
</script>
</body>
</html>
